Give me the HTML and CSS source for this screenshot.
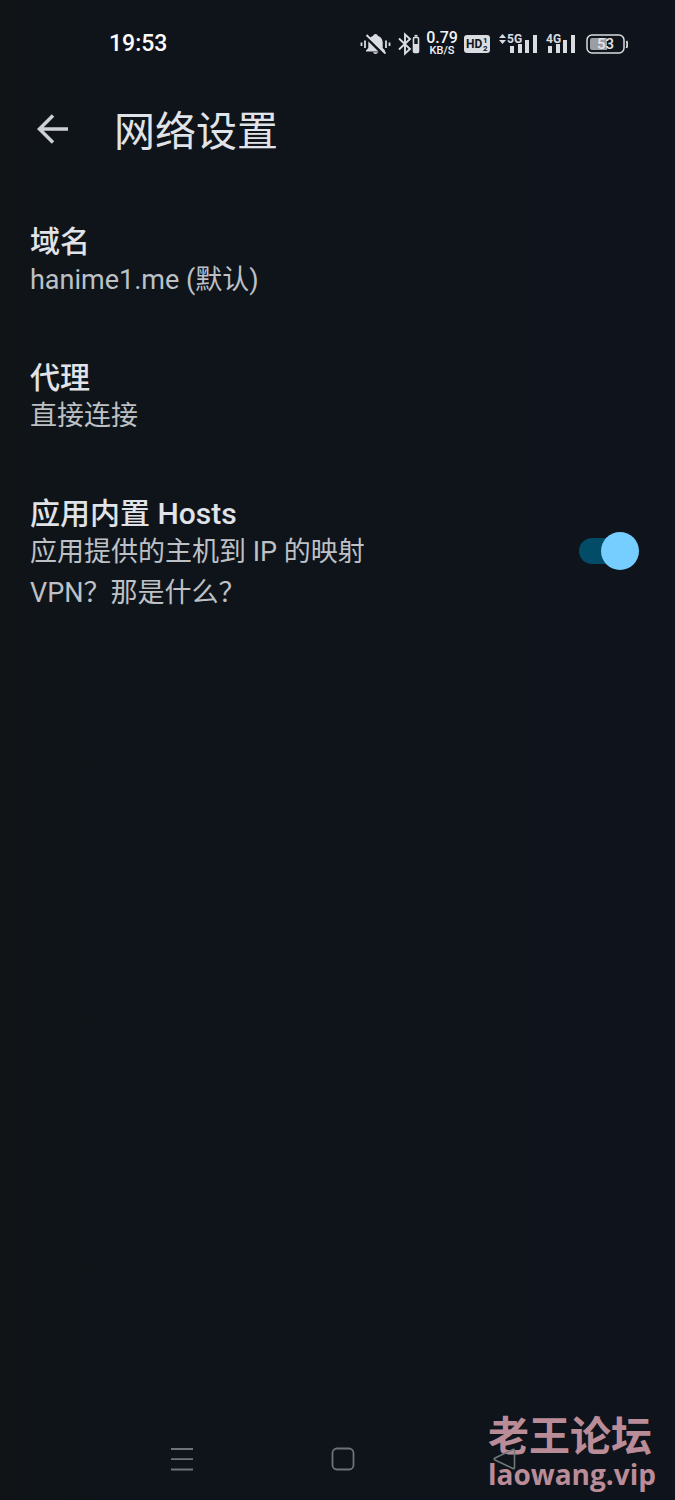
FILE: index.html
```html
<!DOCTYPE html>
<html lang="zh-CN">
<head>
<meta charset="utf-8">
<meta name="viewport" content="width=device-width, initial-scale=1">
<title>网络设置</title>
<link rel="stylesheet" href="styles.css">
</head>
<body>
<div class="screen">
  <div class="status">
    <time class="clock">19:53</time>
    <div class="indicators">
      <svg width="31" height="26" viewBox="0 0 31 26" fill="#d9dce0" aria-hidden="true">
        <path d="M15.500 3c-1.300 0-2 .8-2.200 1.700C10.200 5.600 8.300 8 8.300 11.500V17L6 19.500V20.500H25V19.500L22.700 17V11.500C22.700 8 20.800 5.600 17.700 4.700C17.500 3.800 16.800 3 15.500 3ZM13 21.300H18C17.700 22.500 16.700 23 15.500 23S13.300 22.500 13 21.300Z"/>
        <path d="M5 5L23 23" stroke="#0f1319" stroke-width="3"/>
        <path d="M6.500 4L25.500 22.500" stroke="#d9dce0" stroke-width="1.800"/>
        <path d="M1.500 11.500V15M5 9.500V17M26 9.500V17M29.500 11.500V15" stroke="#d9dce0" stroke-width="1.800"/>
      </svg>
      <svg width="22" height="26" viewBox="0 0 22 26" fill="none" stroke="#d9dce0" aria-hidden="true">
        <path d="M1 7.500L12 18L7 22.500V3.500L12 8L1 18.500" stroke-width="1.900"/>
        <rect x="15.500" y="6.500" width="5" height="15" rx="1" stroke-width="1.600"/>
        <path d="M16.500 4.800H19.500" stroke-width="1.800"/>
        <path d="M18 13V21" stroke-width="4"/>
      </svg>
      <div class="speed"><span class="rate">0.79</span><span class="unit">KB/S</span></div>
      <svg width="26" height="26" viewBox="0 0 26 26" aria-label="HD 1 2">
        <rect x="0" y="4" width="26" height="18" rx="3" fill="#d9dce0"/>
        <g fill="#11151b" font-family="Roboto, sans-serif" font-weight="700">
          <text x="2" y="17" font-size="12">HD</text>
          <text x="19" y="12" font-size="8">1</text>
          <text x="19" y="20" font-size="8">2</text>
        </g>
      </svg>
      <svg class="sim" width="38" height="26" viewBox="0 0 38 26" fill="#d9dce0" aria-label="5G">
        <path d="M0 7L3.500 3L7 7ZM0 9H7L3.500 13Z"/>
        <text class="net" x="8" y="12">5G</text>
        <path d="M11 15h4v7h-4ZM19 13h4v9h-4ZM26 9h4v13h-4ZM34 4h4v18h-4Z"/>
      </svg>
      <svg class="sim" width="29" height="26" viewBox="0 0 29 26" fill="#d9dce0" aria-label="4G">
        <text class="net" x="0" y="12">4G</text>
        <path d="M2 15h4v7H2ZM10 13h4v9h-4ZM17 9h4v13h-4ZM25 4h4v18h-4Z"/>
      </svg>
      <svg class="battery" width="42" height="26" viewBox="0 0 42 26" aria-label="53%">
        <rect x="1" y="4" width="37" height="18" rx="5" fill="none" stroke="#d9dce0" stroke-width="1.500"/>
        <path d="M6 7H21V19H6Q4 19 4 17V9Q4 7 6 7Z" fill="#9a9da1"/>
        <path d="M40.500 10Q42 13 40.500 17" fill="none" stroke="#d9dce0" stroke-width="1.800"/>
        <text x="11" y="18" font-family="Roboto, sans-serif" font-size="15" font-weight="500" fill="#e3e5e8">53</text>
      </svg>
    </div>
  </div>

  <header class="appbar">
    <button class="back" type="button" aria-label="返回">
      <svg width="32" height="32" viewBox="0 0 32 32" fill="none" stroke="#cdd0d4" stroke-width="3.500" aria-hidden="true">
        <path d="M32 16H4M17 2.500L3.500 16L17 29.500"/>
      </svg>
    </button>
    <h1 class="heading">网络设置</h1>
  </header>

  <main class="list">
    <button class="item" type="button">
      <span class="name">域名</span>
      <span class="detail">hanime1.me (默认)</span>
    </button>
    <button class="item" type="button">
      <span class="name">代理</span>
      <span class="detail">直接连接</span>
    </button>
    <label class="item toggle">
      <span class="texts">
        <span class="name">应用内置 Hosts</span>
        <span class="detail">应用提供的主机到 IP 的映射<br>VPN？那是什么？</span>
      </span>
      <input class="switch" type="checkbox" role="switch" checked>
    </label>
  </main>

  <nav class="navbar">
    <button class="key" type="button" aria-label="最近任务">
      <svg width="24" height="24" viewBox="0 0 24 24" fill="none" stroke="#6f7276" stroke-width="1.800"><path d="M1 2H23M1 12.200H23M1 22.500H23"/></svg>
    </button>
    <button class="key" type="button" aria-label="主屏幕">
      <svg width="24" height="24" viewBox="0 0 24 24" fill="none" stroke="#6f7276" stroke-width="1.800"><rect x="1.500" y="1.500" width="21" height="21" rx="4.500"/></svg>
    </button>
    <button class="key key-back" type="button" aria-label="返回">
      <svg width="24" height="24" viewBox="0 0 24 24" fill="none" stroke="#6c7978" stroke-width="1.600" stroke-linejoin="round"><path d="M21 2.500Q22.500 2 22.500 3.500V20.500Q22.500 22 21 21.500L3 13Q1.500 12 3 11Z"/></svg>
    </button>
  </nav>

  <div class="watermark">
    <span class="mark-name">老王论坛</span>
    <span class="mark-site">laowang.vip</span>
  </div>
</div>
</body>
</html>
```
FILE: styles.css
```css
* {
  box-sizing: border-box;
}

body {
  margin: 0;
  background: #0f131a;
  color: #e0e3e8;
  font-family: Roboto, "Noto Sans CJK SC", sans-serif;
}

button {
  padding: 0;
  border: 0;
  background: none;
  color: inherit;
  font: inherit;
  text-align: left;
}

svg {
  display: block;
}

.screen {
  position: relative;
  display: flex;
  flex-direction: column;
  min-height: 100vh;
  background: linear-gradient(90deg, #101417, #0f141a 15%, #0f131b);
}

.status {
  display: flex;
  justify-content: space-between;
  align-items: center;
  height: 87px;
  padding: 0 47px 0 109px;
}

.clock {
  font-size: 23px;
  font-weight: 500;
  color: #fff;
}

.indicators {
  display: flex;
  align-items: center;
  gap: 7px;
}

.sim {
  margin-left: 2px;
}

.battery {
  margin-left: 4px;
}

.net {
  font-family: Roboto, sans-serif;
  font-size: 12px;
  font-weight: 700;
}

.speed {
  display: flex;
  flex-direction: column;
  align-items: center;
  width: 30px;
  font-weight: 500;
  color: #f2f3f5;
}

.rate {
  font-size: 16px;
  line-height: 14px;
}

.unit {
  font-size: 11px;
  line-height: 12px;
}

.appbar {
  display: flex;
  align-items: center;
  gap: 46px;
  height: 84px;
  padding: 0 36px;
}

.heading {
  margin: 0;
  padding-top: 6px;
  font-size: 41px;
  font-weight: 400;
  line-height: 60px;
}

.list {
  display: flex;
  flex-direction: column;
  flex: 1;
  padding-top: 22px;
}

.item {
  display: flex;
  flex-direction: column;
  padding: 30px 30px 28px;
}

.toggle {
  flex-direction: row;
  justify-content: space-between;
  align-items: center;
}

.texts {
  display: flex;
  flex-direction: column;
}

.name {
  font-size: 30px;
  font-weight: 500;
  line-height: 37px;
}

.detail {
  font-size: 27px;
  line-height: 41px;
  color: #bdc1c6;
}

.switch {
  appearance: none;
  display: flex;
  justify-content: flex-end;
  align-items: center;
  width: 52px;
  height: 26px;
  margin: 0 14px 8px 0;
  background: #034c67;
  border-radius: 13px;
}

.switch::before {
  content: "";
  flex: none;
  width: 38px;
  height: 38px;
  margin-right: -8px;
  border-radius: 50%;
  background: #76cdff;
}

.navbar {
  display: grid;
  grid-template-columns: repeat(3, 1fr);
  height: 82px;
  padding: 0 90px 0 101px;
}

.key {
  display: flex;
  justify-content: center;
  align-items: center;
}

.key-back {
  position: relative;
  z-index: 2;
}

.watermark {
  position: absolute;
  right: 19px;
  bottom: 8px;
  display: flex;
  flex-direction: column;
  color: #b98c98;
  font-weight: 700;
}

.mark-name {
  font-family: "Noto Sans CJK SC", sans-serif;
  font-size: 41px;
  line-height: 46px;
}

.mark-site {
  font-family: "Open Sans", sans-serif;
  font-size: 28px;
  line-height: 36px;
}
```
